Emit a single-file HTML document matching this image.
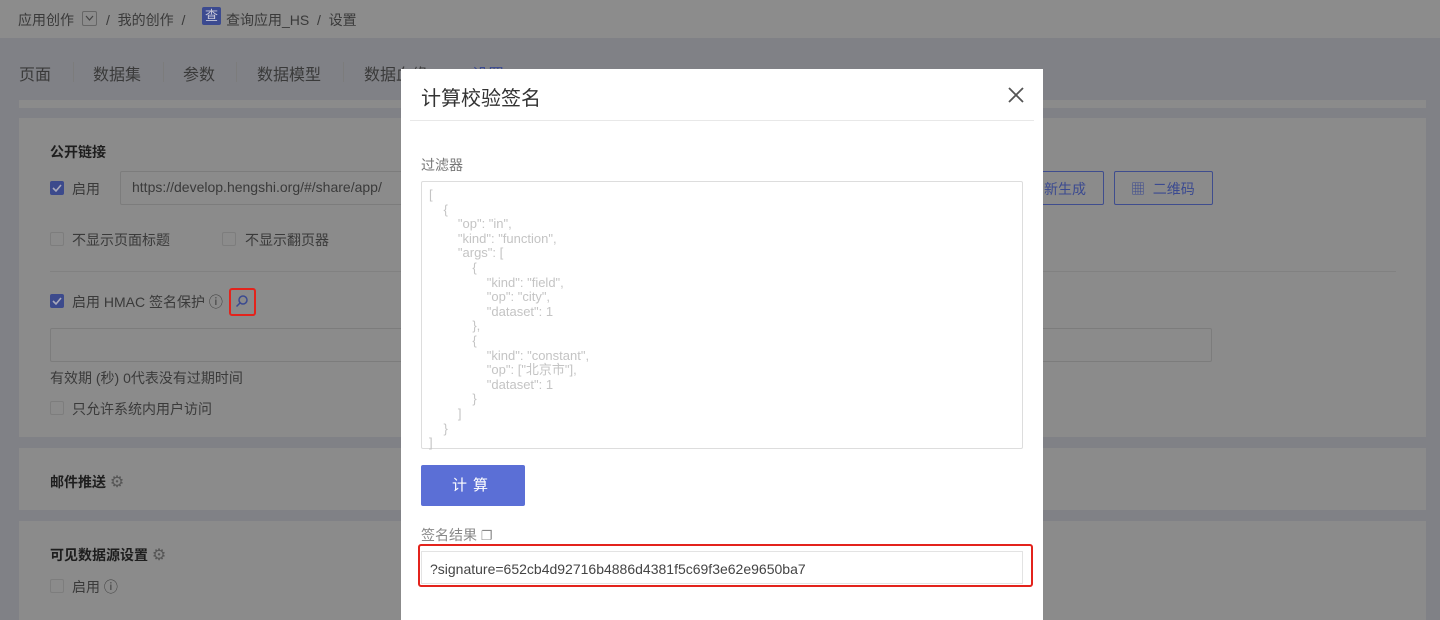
<!DOCTYPE html>
<html><head><meta charset="utf-8"><style>
*{box-sizing:border-box;margin:0;padding:0}
body{width:1440px;height:620px;overflow:hidden;background:#808186;font-family:"Liberation Sans","Noto Sans CJK SC",sans-serif;position:relative;color:#333}
.abs{position:absolute}
.top{left:0;top:0;width:1440px;height:38px;background:#8c8c8c;font-size:14px;color:#3a3a3a}
.tabs{font-size:16px;color:#3a3a3a}
.panel{background:#8b8b8b;left:19px;width:1407px}
.cb{width:14px;height:14px;border:1px solid #7d7d7d;background:#8b8b8b;border-radius:2px}
.cbc{width:14px;height:14px;background:#3c4a8c;border-radius:2px}
.t{font-size:14px;color:#3a3a3a;white-space:nowrap}
.b{font-weight:bold;color:#1e1e1e}
.inp{border:1px solid #7c7c7c;background:#8b8b8b;border-radius:2px}
.modal{left:401px;top:69px;width:642px;height:551px;background:#fff}
.code{font-size:13px;color:#c4c4c4;line-height:14.6px;white-space:pre;left:429px;top:188px}
</style></head><body>
<div class="abs top">
 <div class="abs t" style="left:18px;top:10px">应用创作</div>
 <div class="abs" style="left:82px;top:11px;width:15px;height:15px;border:1px solid #666;border-radius:2px"></div>
 <svg class="abs" style="left:85px;top:15px" width="9" height="7"><path d="M1 1L4.5 5L8 1" fill="none" stroke="#444" stroke-width="1.2"/></svg>
 <div class="abs t" style="left:106px;top:10px">/ &nbsp;我的创作 &nbsp;/</div>
 <div class="abs" style="left:202px;top:7px;width:19px;height:18px;background:#3b4a90;border-radius:2px;color:#c8c8d8;font-size:13px;text-align:center;line-height:18px">查</div>
 <div class="abs t" style="left:226px;top:10px">查询应用_HS &nbsp;/ &nbsp;设置</div>
</div>
<div class="abs tabs" style="left:19px;top:61px">页面</div>
<div class="abs tabs" style="left:93px;top:61px">数据集</div>
<div class="abs tabs" style="left:183px;top:61px">参数</div>
<div class="abs tabs" style="left:257px;top:61px">数据模型</div>
<div class="abs tabs" style="left:364px;top:61px">数据血缘</div>
<div class="abs tabs" style="left:472px;top:61px;color:#3b4a90">设置</div>
<div class="abs" style="left:73px;top:62px;width:1px;height:20px;background:#7c7c7c"></div>
<div class="abs" style="left:163px;top:62px;width:1px;height:20px;background:#7c7c7c"></div>
<div class="abs" style="left:236px;top:62px;width:1px;height:20px;background:#7c7c7c"></div>
<div class="abs" style="left:343px;top:62px;width:1px;height:20px;background:#7c7c7c"></div>
<div class="abs panel" style="top:100px;height:8px"></div>
<div class="abs panel" style="top:118px;height:319px"></div>
<div class="abs panel" style="top:448px;height:62px"></div>
<div class="abs panel" style="top:521px;height:99px"></div>
<div class="abs t b" style="left:50px;top:142px">公开链接</div>
<div class="abs cbc" style="left:50px;top:181px"></div>
<svg class="abs" style="left:50px;top:181px" width="14" height="14"><path d="M3 7L6 10L11 4" fill="none" stroke="#aab" stroke-width="1.6"/></svg>
<div class="abs t" style="left:72px;top:179px">启用</div>
<div class="abs inp" style="left:120px;top:171px;width:290px;height:34px"></div>
<div class="abs t" style="left:132px;top:179px;font-size:14px">https://develop.hengshi.org/#/share/app/</div>
<div class="abs inp" style="left:1000px;top:171px;width:104px;height:34px;border-color:#3f4d8e"></div>
<div class="abs t" style="left:1044px;top:179px;color:#3b4a90">新生成</div>
<div class="abs inp" style="left:1114px;top:171px;width:99px;height:34px;border-color:#3f4d8e"></div>
<div class="abs t" style="left:1131px;top:179px;color:#3b4a90">&#9638; &nbsp;二维码</div>
<div class="abs cb" style="left:50px;top:232px"></div>
<div class="abs t" style="left:72px;top:230px">不显示页面标题</div>
<div class="abs cb" style="left:222px;top:232px"></div>
<div class="abs t" style="left:245px;top:230px">不显示翻页器</div>
<div class="abs" style="left:50px;top:271px;width:1346px;height:1px;background:#818181"></div>
<div class="abs cbc" style="left:50px;top:294px"></div>
<svg class="abs" style="left:50px;top:294px" width="14" height="14"><path d="M3 7L6 10L11 4" fill="none" stroke="#aab" stroke-width="1.6"/></svg>
<div class="abs t" style="left:72px;top:292px">启用 HMAC 签名保护 ⓘ</div>
<div class="abs" style="left:229px;top:288px;width:27px;height:28px;border:2px solid #e3231c;border-radius:3px"></div>
<svg class="abs" style="left:234px;top:293px" width="16" height="16" viewBox="0 0 16 16"><circle cx="9" cy="7" r="4" fill="none" stroke="#3b4a90" stroke-width="1.5"/><path d="M6 10L2.5 13.5" stroke="#3b4a90" stroke-width="1.5"/></svg>
<div class="abs inp" style="left:50px;top:328px;width:1162px;height:34px"></div>
<div class="abs t" style="left:50px;top:368px">有效期 (秒) 0代表没有过期时间</div>
<div class="abs cb" style="left:50px;top:401px"></div>
<div class="abs t" style="left:72px;top:399px">只允许系统内用户访问</div>
<div class="abs t b" style="left:50px;top:472px">邮件推送 <span style="font-weight:normal;color:#555;font-size:16px">⚙</span></div>
<div class="abs t b" style="left:50px;top:545px">可见数据源设置 <span style="font-weight:normal;color:#555;font-size:16px">⚙</span></div>
<div class="abs cb" style="left:50px;top:579px"></div>
<div class="abs t" style="left:72px;top:577px">启用 ⓘ</div>
<div class="abs modal"></div>
<div class="abs" style="left:421px;top:82px;font-size:20px;color:#333">计算校验签名</div>
<svg class="abs" style="left:1007px;top:86px" width="18" height="18" viewBox="0 0 18 18"><path d="M2 2L16 16M16 2L2 16" stroke="#555" stroke-width="1.8"/></svg>
<div class="abs" style="left:410px;top:120px;width:624px;height:1px;background:#e8e8e8"></div>
<div class="abs t" style="left:421px;top:155px;color:#777">过滤器</div>
<div class="abs" style="left:421px;top:181px;width:602px;height:268px;border:1px solid #ddd;border-radius:2px"></div>
<div class="abs code">[
    {
        "op": "in",
        "kind": "function",
        "args": [
            {
                "kind": "field",
                "op": "city",
                "dataset": 1
            },
            {
                "kind": "constant",
                "op": ["北京市"],
                "dataset": 1
            }
        ]
    }
]</div>
<div class="abs" style="left:421px;top:465px;width:104px;height:41px;background:#5b6fd6;border-radius:2px;color:#fff;font-size:15px;text-align:center;line-height:41px;letter-spacing:6px">计算</div>
<div class="abs t" style="left:421px;top:525px;color:#888">签名结果 <span style="font-size:13px">❐</span></div>
<div class="abs" style="left:418px;top:544px;width:615px;height:43px;border:2px solid #e3231c;border-radius:3px"></div>
<div class="abs" style="left:421px;top:551px;width:602px;height:33px;border:1px solid #e3e3e3"></div>
<div class="abs t" style="left:430px;top:561px;color:#444">?signature=652cb4d92716b4886d4381f5c69f3e62e9650ba7</div>
</body></html>
